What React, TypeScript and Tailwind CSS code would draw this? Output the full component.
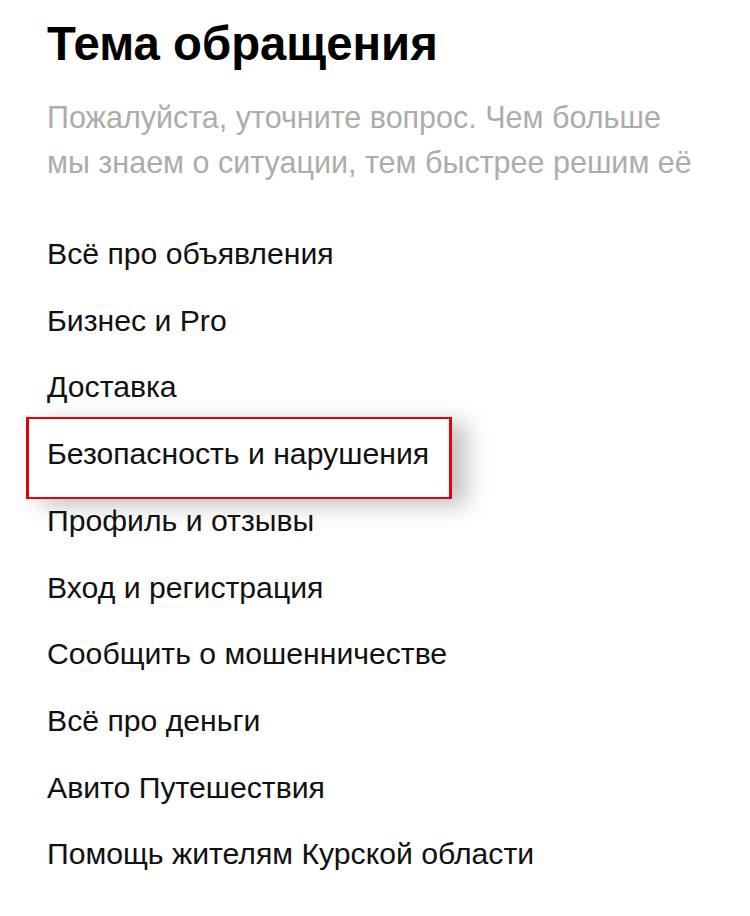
import React from "react";

const items = [
  "Всё про объявления",
  "Бизнес и Pro",
  "Доставка",
  "Безопасность и нарушения",
  "Профиль и отзывы",
  "Вход и регистрация",
  "Сообщить о мошенничестве",
  "Всё про деньги",
  "Авито Путешествия",
  "Помощь жителям Курской области",
];

export default function App() {
  return (
    <div className="w-[750px] h-[916px] bg-white overflow-hidden font-['Liberation_Sans',Arial,sans-serif]">
      <div className="pl-[47px] pr-4 pt-[18px]">
        <h1 className="text-[47.3px] leading-[52px] font-bold text-black">Тема обращения</h1>
        <p className="mt-[25px] text-[30.5px] leading-[45px] text-[#acacac]">
          Пожалуйста, уточните вопрос. Чем больше
          <br />
          мы знаем о ситуации, тем быстрее решим её
        </p>
      </div>
      <ul className="mt-[36px] flex flex-col">
        {items.map((t, i) =>
          i === 3 ? (
            <li
              key={t}
              className="ml-[26px] w-[426px] h-[82px] -mt-[4px] -mb-[11px] pl-[18px] pt-[18px] leading-[34px] border-x-[3px] border-y-2 border-[#e3000f] shadow-[14px_6px_22px_rgba(0,0,0,0.25)] bg-white text-[30.2px] text-[#111]"
            >
              {t}
            </li>
          ) : (
            <li key={t} className="pl-[47px] h-[66.67px] leading-[66.67px] text-[30.2px] text-[#111]">
              {t}
            </li>
          )
        )}
      </ul>
    </div>
  );
}
